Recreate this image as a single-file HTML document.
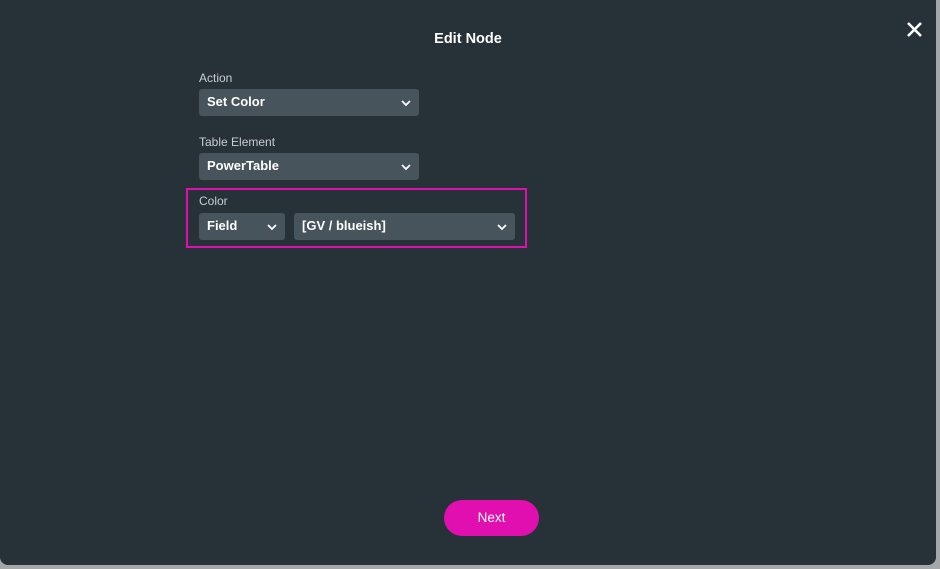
<!DOCTYPE html>
<html><head><style>
body{margin:0;width:940px;height:569px;background:#a4a6a7;overflow:hidden;font-family:"Liberation Sans",sans-serif;position:relative}
.m{position:absolute;left:0;top:0;width:936px;height:565px;background:#263238;border-radius:0 0 8px 8px}
.t{position:absolute;top:31px;left:0;width:936px;text-align:center;color:#fff;font-weight:bold;font-size:14.5px}
.x{position:absolute;left:906px;top:21px}
.l{position:absolute;left:199px;color:#c9cdd0;font-size:12px}
.d{position:absolute;background:#48545c;border-radius:3px;height:27px;color:#fff;font-size:13px;font-weight:bold;line-height:26px;padding-left:8px;box-sizing:border-box}
.d svg{position:absolute;right:8px;top:11px}
.hl{position:absolute;left:186px;top:188px;width:337px;height:56px;border:2px solid #e10fb0}
.n{position:absolute;left:444px;top:500px;width:95px;height:36px;border-radius:18px;background:#e10fb0;color:#fff;text-align:center;line-height:36px;font-size:13.5px}
</style></head><body>
<div class="m">
<div class="t">Edit Node</div>
<svg class="x" width="17" height="17" viewBox="0 0 17 17"><path d="M2 2L15 15M15 2L2 15" stroke="#fff" stroke-width="2.6"/></svg>
<div class="l" style="top:71px">Action</div>
<div class="d" style="left:199px;top:89px;width:220px">Set Color<svg width="10" height="7"><path d="M1 1L5 5L9 1" stroke="#fff" stroke-width="1.8" fill="none"/></svg></div>
<div class="l" style="top:135px">Table Element</div>
<div class="d" style="left:199px;top:153px;width:220px">PowerTable<svg width="10" height="7"><path d="M1 1L5 5L9 1" stroke="#fff" stroke-width="1.8" fill="none"/></svg></div>
<div class="hl"></div>
<div class="l" style="top:194px">Color</div>
<div class="d" style="left:199px;top:213px;width:86px">Field<svg width="10" height="7"><path d="M1 1L5 5L9 1" stroke="#fff" stroke-width="1.8" fill="none"/></svg></div>
<div class="d" style="left:294px;top:213px;width:221px">[GV / blueish]<svg width="10" height="7"><path d="M1 1L5 5L9 1" stroke="#fff" stroke-width="1.8" fill="none"/></svg></div>
<div class="n">Next</div>
</div>
</body></html>
